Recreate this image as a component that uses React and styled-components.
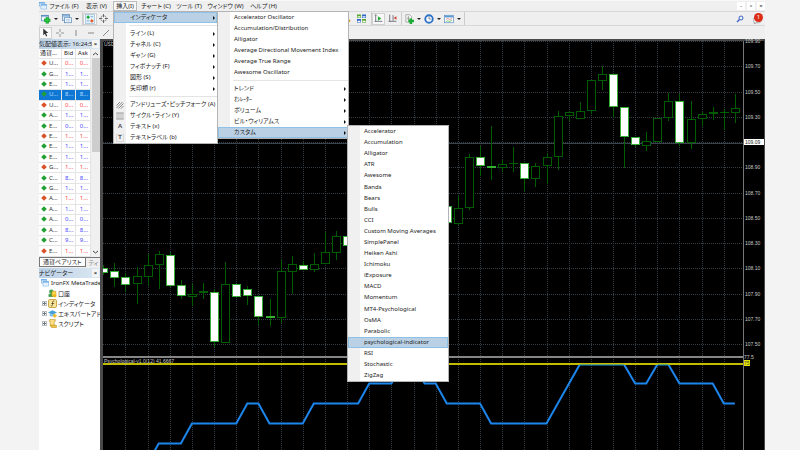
import React from 'react';
import styled, { createGlobalStyle, css } from 'styled-components';

const GlobalStyle = createGlobalStyle`
  * {
    box-sizing: border-box;
  }
  body {
    margin: 0;
    background: #f3f3f3;
    font-family: "Noto Sans", "Noto Sans CJK JP", sans-serif;
    font-size: 6px;
    color: #222;
  }
  button {
    font: inherit;
    color: inherit;
    background: none;
    border: 0;
    margin: 0;
    padding: 0;
  }
  ul {
    list-style: none;
    margin: 0;
    padding: 0;
  }
`;

const menus = ['ファイル (F)', '表示 (V)', '挿入(I)', 'チャート (C)', 'ツール (T)', 'ウィンドウ (W)', 'ヘルプ (H)'];

const customIndicators = [
  'Accelerator', 'Accumulation', 'Alligator', 'ATR', 'Awesome', 'Bands', 'Bears', 'Bulls', 'CCI',
  'Custom Moving Averages', 'SimplePanel', 'Heiken Ashi', 'Ichimoku', 'iExposure', 'MACD', 'Momentum',
  'MT4-Psychological', 'OsMA', 'Parabolic', 'psychological-indicator', 'RSI', 'Stochastic', 'ZigZag',
].map((label) => ({ label, active: label === 'psychological-indicator' }));

const indicatorMenu = [
  { label: 'Accelerator Oscillator' },
  { label: 'Accumulation/Distribution' },
  { label: 'Alligator' },
  { label: 'Average Directional Movement Index' },
  { label: 'Average True Range' },
  { label: 'Awesome Oscillator' },
  { line: true },
  { label: 'トレンド', more: true },
  { label: 'ｵｼﾚｰﾀｰ', more: true },
  { label: 'ボリューム', more: true },
  { label: 'ビル・ウィリアムス', more: true },
  { label: 'カスタム', more: true, active: true, children: customIndicators },
];

const insertMenu = [
  { label: 'インディケータ', more: true, active: true, children: indicatorMenu },
  { line: true },
  { label: 'ライン (L)', more: true },
  { label: 'チャネル (C)', more: true },
  { label: 'ギャン (G)', more: true },
  { label: 'フィボナッチ (F)', more: true },
  { label: '図形 (S)', more: true },
  { label: '矢印類 (r)', more: true },
  { line: true },
  { label: 'アンドリューズ・ピッチフォーク (A)', icon: 'fork' },
  { label: 'サイクル・ライン (Y)', icon: 'cycle' },
  { label: 'テキスト (x)', icon: 'text' },
  { label: 'テキストラベル (b)', icon: 'label' },
];

// symbol, price, direction, selected
const quotes = [
  ['U...', '0...', 'down'], ['G...', '1...', 'up'], ['E...', '1...', 'up'], ['U...', '8...', 'up', true],
  ['U...', '0...', 'down'], ['A...', '1...', 'up'], ['E...', '0...', 'up'], ['E...', '1...', 'down'],
  ['E...', '1...', 'up'], ['E...', '1...', 'up'], ['G...', '1...', 'down'], ['C...', '8...', 'up'],
  ['G...', '1...', 'up'], ['A...', '1...', 'down'], ['A...', '1...', 'up'], ['A...', '0...', 'up'],
  ['A...', '8...', 'up'], ['C...', '9...', 'up'], ['E...', '1...', 'down'],
];

// bar index, body top, body bottom, high, low, filled
const candles = [
  [0, 268, 273, 265, 275, 1], [1, 271, 278, 263, 287, 1], [2, 277, 285, 273, 292, 1],
  [3, 276, 284, 267, 304], [4, 265, 277, 254, 285], [5, 254, 265, 251, 289],
  [6, 255, 286, 252, 287, 1], [7, 285, 296, 280, 299, 1], [8, 294, 297, 284, 306],
  [9, 291, 293, 283, 299], [10, 292, 342, 289, 347, 1], [11, 284, 343, 262, 343],
  [12, 284, 297, 284, 297, 1], [13, 289, 296, 286, 305, 1], [14, 296, 317, 296, 325, 1],
  [15, 316, 318, 299, 326, 1], [16, 271, 318, 260, 323], [17, 264, 272, 256, 294],
  [18, 265, 270, 261, 270, 1], [19, 264, 270, 253, 272], [20, 252, 264, 232, 264],
  [21, 236, 253, 231, 260], [22, 236, 246, 236, 246, 1], [31, 206, 223, 206, 223, 1],
  [32, 208, 224, 196, 225], [33, 157, 208, 154, 210], [34, 157, 166, 146, 176, 1],
  [35, 166, 168, 126, 180, 1], [36, 164, 168, 160, 172], [37, 163, 164, 147, 172],
  [38, 163, 179, 163, 191, 1], [39, 166, 179, 163, 187], [40, 157, 166, 153, 184],
  [41, 116, 157, 111, 170], [42, 112, 116, 111, 121], [43, 111, 119, 102, 119],
  [44, 80, 111, 80, 114], [45, 74, 81, 66, 90], [46, 74, 107, 74, 117, 1],
  [47, 107, 137, 107, 168, 1], [48, 137, 145, 137, 147, 1], [49, 141, 146, 132, 151],
  [50, 118, 142, 118, 142], [51, 101, 118, 93, 121], [52, 101, 143, 94, 146, 1],
  [53, 119, 143, 101, 149], [54, 114, 119, 112, 126], [55, 112, 114, 107, 120],
  [56, 112, 113, 109, 130], [57, 108, 113, 94, 123],
];

// bar index, y
const psycho = [
  [4, 463], [5, 443], [7, 443], [8, 423], [12, 423], [13, 403], [14, 403], [15, 423], [18, 423], [19, 403],
  [23, 403], [24, 383], [26, 383], [27, 364], [28, 364], [29, 383], [30, 383], [31, 403], [34, 403],
  [35, 423], [40, 423], [43, 364], [47, 364], [48, 383], [49, 383], [50, 364], [51, 364], [52, 383],
  [55, 383], [56, 403], [57, 403],
];

const prices = ['109.90', '109.70', '109.50', '109.30', '109.09', '108.90', '108.70', '108.50', '108.30', '108.10', '107.90', '107.70', '107.50'];

const barX = (i) => 103.3 + i * 11.08;

/* ---------- icons ---------- */

const glyphs = {
  logo: (
    <>
      <rect x="1" y="1" width="10" height="7" fill="#fff" stroke="#4f9ae0" />
      <path d="M1 2h10" stroke="#4f9ae0" strokeWidth="2" />
      <rect x="4" y="5" width="11" height="9" fill="#fff" stroke="#4f9ae0" />
      <path d="M4 6h11" stroke="#4f9ae0" strokeWidth="2" />
      <path d="M6 11l2-2 2 2 3-2" fill="none" stroke="#79b4e8" />
    </>
  ),
  newChart: (
    <>
      <rect x="1" y="2" width="11" height="9" fill="#eef6ff" stroke="#4c82b8" />
      <path d="M1 3h11" stroke="#4c82b8" strokeWidth="2" />
      <path d="M10 5v10M5 10h10" stroke="#10932a" strokeWidth="5" />
      <path d="M10 6v8M6 10h8" stroke="#27c63f" strokeWidth="3" />
    </>
  ),
  profiles: (
    <>
      <rect x="1" y="1" width="11" height="9" fill="#dcebfa" stroke="#4477a8" />
      <path d="M1 3h11" stroke="#6fa2d4" strokeWidth="2" />
      <rect x="4" y="6" width="11" height="8" fill="#f7fbff" stroke="#4477a8" />
      <path d="M6 9h7M6 11h7" stroke="#8eb8df" />
    </>
  ),
  market: (
    <>
      <rect x="1" y="1" width="14" height="14" fill="#e4f1fb" stroke="#8cb6d8" />
      <path d="M5 2l3 3-3 3-3-3z" fill="#1ba832" />
      <path d="M11 8l3 3-3 3-3-3z" fill="#e35c22" />
      <path d="M9 4h4M3 11h4" stroke="#8cbbe2" strokeWidth="2" />
    </>
  ),
  target: (
    <>
      <circle cx="8" cy="8" r="5" fill="#fff" stroke="#555" />
      <path d="M8 0v6M8 10v6M0 8h6M10 8h6" stroke="#555" strokeWidth="1.5" />
    </>
  ),
  handle: <path d="M0 7l6 6" stroke="#d8a02a" strokeWidth="4" />,
  tiles: (
    <>
      <path d="M0 1h7v6H0zM9 9h7v6H9z" fill="#56a631" />
      <path d="M9 1h7v6H9zM0 9h7v6H0z" fill="#2f66c4" />
      <path d="M1 5h5M10 5h5M1 13h5M10 13h5" stroke="#fff" strokeWidth="2" />
    </>
  ),
  scroll: (
    <>
      <path d="M3 1v13M1 13h14" stroke="#667" strokeWidth="1.5" />
      <path d="M7 4l6 4-6 4z" fill="#22ac38" />
      <path d="M1 3l2-2 2 2" fill="none" stroke="#667" />
    </>
  ),
  shift: (
    <>
      <path d="M3 1v13M1 13h14M9 2v10" stroke="#667" strokeWidth="1.5" />
      <path d="M15 4l-5 3 5 3z" fill="#c8452c" />
    </>
  ),
  addIndicator: (
    <>
      <path d="M3 1h6l3 3v9H3z" fill="#f6f6f6" stroke="#888" />
      <path d="M5 7h4M7 3v8" stroke="#777" />
      <path d="M11 7v9M7 11h9" stroke="#1cab34" strokeWidth="4" />
    </>
  ),
  clock: (
    <>
      <circle cx="8" cy="8" r="6" fill="#f4faff" stroke="#2d73c7" strokeWidth="3" />
      <path d="M8 4v4h3" fill="none" stroke="#555" />
    </>
  ),
  template: (
    <>
      <rect x="1" y="2" width="14" height="12" fill="#fff" stroke="#4b86bd" />
      <path d="M1 4h14" stroke="#5d9bd3" strokeWidth="3" />
      <path d="M3 9l3-2 3 2 4-2" fill="none" stroke="#c55" />
      <path d="M3 12l3-1 3 1 4-2" fill="none" stroke="#3a3" />
    </>
  ),
  search: (
    <>
      <circle cx="10" cy="6" r="4" fill="#eef3ff" stroke="#3c62c0" strokeWidth="2" />
      <path d="M7 9l-5 5" stroke="#3c62c0" strokeWidth="3" />
    </>
  ),
  chat: <path d="M1 7h10c4 3 2 7-2 7H6l-4 2v-3C0 12-1 9 1 7z" fill="#e4e4e4" stroke="#888" />,
  cursor: <path d="M4 1v12l3-3 2 5 2-1-2-5h4z" fill="#333" />,
  cross: <path d="M8 0v6M8 10v6M0 8h6M10 8h6" stroke="#777" strokeWidth="1.5" />,
  vline: <path d="M8 2v12" stroke="#666" strokeWidth="1.5" />,
  hline: <path d="M2 8h12" stroke="#666" strokeWidth="1.5" />,
  trend: <path d="M2 14L14 2" stroke="#666" strokeWidth="1.5" />,
  fork: <path d="M1 9l7-7M1 14L13 2M5 15L15 5M10 15l5-5" stroke="#666" strokeWidth="1.5" />,
  cycle: <path d="M2 1v14M6 1v14M10 1v14M14 1v14M1 2h14M1 14h14" stroke="#777" />,
  label: <rect x="1" y="1" width="14" height="14" fill="none" stroke="#999" strokeDasharray="2 2" />,
  account: (
    <>
      <circle cx="6" cy="5" r="4" fill="#40a24a" />
      <path d="M1 14V9h10v5z" fill="#3d9b46" />
      <path d="M7 4h7v9H7z" fill="#ffd84d" stroke="#b98a12" />
      <circle cx="12" cy="12" r="3" fill="#f0b71c" />
    </>
  ),
  func: (
    <>
      <rect x="1" y="1" width="14" height="14" rx="2" fill="#f9e9a2" stroke="#bd9523" strokeWidth="1.5" />
      <path d="M11 4c-3-1-3 1-3 4s0 5-3 4M6 8h5" fill="none" stroke="#594514" strokeWidth="1.5" />
    </>
  ),
  expert: (
    <>
      <path d="M0 6l8-4 8 4-8 4z" fill="#4aa0d8" />
      <path d="M3 8v4c3 2 7 2 9 0V8l-4 2z" fill="#78bde6" />
      <path d="M12 8l4 4-4 4-4-4z" fill="#f0bd35" />
    </>
  ),
  script: (
    <>
      <path d="M3 1h10v3h-2v8H4V4H2z" fill="#ffe084" stroke="#b68c1d" />
      <path d="M4 11h11v4H6z" fill="#f3c33d" stroke="#b68c1d" />
    </>
  ),
};

const Svg = styled.svg`
  display: block;
  flex: none;
  width: ${(p) => p.$size || 10}px;
  height: ${(p) => p.$size || 10}px;
`;

const Icon = ({ name, size }) => (
  <Svg viewBox="0 0 16 16" $size={size} aria-hidden="true">{glyphs[name]}</Svg>
);

/* ---------- frame ---------- */

const Page = styled.div`
  height: 100vh;
  padding: 0 35px 0 39px;
  overflow: hidden;
`;

const Window = styled.div`
  height: 100%;
  display: flex;
  flex-direction: column;
  background: #efefef;
`;

const MenuBar = styled.nav`
  display: flex;
  align-items: stretch;
  height: 11px;
  border-top: 1px solid #f8f8f8;
  font-feature-settings: "palt";
  white-space: nowrap;
`;

const LogoBox = styled.div`
  width: 9px;
  display: flex;
  align-items: center;
`;

const MenuSlot = styled.div`
  position: relative;
  display: flex;
  width: ${(p) => p.$width}px;
`;

const MenuButton = styled.button`
  width: 100%;
  line-height: 9px;
  ${(p) => p.$open && css`
    background: #f7f7f7;
    box-shadow: inset 0 0 0 1px #bbb;
  `}
`;

const WindowButtons = styled.div`
  display: flex;
  align-items: center;
  gap: 2px;
  margin-left: auto;
`;

const WindowButton = styled.button`
  width: 8px;
  height: 8px;
  background: #fff;
  font-size: 6px;
  line-height: 7px;
`;

/* ---------- drop-down menus ---------- */

const MenuList = styled.ul`
  position: absolute;
  z-index: 2;
  top: ${(p) => p.$top};
  left: ${(p) => p.$left};
  width: ${(p) => p.$width}px;
  min-height: ${(p) => p.$minHeight || 0}px;
  display: flex;
  flex-direction: column;
  border: 1px solid #b4b4b4;
  background: linear-gradient(90deg, #f0f0f0 12px, #fff 12px);
`;

const MenuRow = styled.li`
  position: relative;
  flex: 1 0 11px;
  display: flex;
`;

const MenuLine = styled.li`
  height: 5px;
  margin-left: 15px;
  background: linear-gradient(#e4e4e4, #e4e4e4) 0 2px / 100% 1px no-repeat;
`;

const MenuItem = styled.button`
  width: 100%;
  display: grid;
  grid-template-columns: 16px 1fr 4px;
  align-items: center;
  text-align: left;
  line-height: 11px;
  white-space: nowrap;
  ${(p) => p.$active && css`
    background: #bad1e5;
    box-shadow: inset 0 0 0 1px #8fc0e6;
  `}
`;

const ItemIcon = styled.span`
  display: grid;
  place-items: center;
  width: 12px;
  font-size: 6px;
  color: #555;

  > * {
    grid-area: 1 / 1;
  }
`;

const Arrow = styled.span`
  width: 0;
  height: 0;
  border: 2px solid transparent;
  border-left-color: #111;
  border-right: 0;
`;

function Menu({ items, ...box }) {
  return (
    <MenuList role="menu" {...box}>
      {items.map((item, i) => item.line ? <MenuLine key={i} role="separator" /> : (
        <MenuRow key={i} role="none">
          <MenuItem role="menuitem" $active={item.active}>
            <ItemIcon>
              {item.icon && item.icon !== 'text' && <Icon name={item.icon} size={8} />}
              {item.icon === 'text' && <b>A</b>}
              {item.icon === 'label' && <b>T</b>}
            </ItemIcon>
            <span>{item.label}</span>
            {item.more && <Arrow />}
          </MenuItem>
          {item.children === indicatorMenu && <Menu items={item.children} $top="-1px" $left="103px" $width={132} />}
          {item.children === customIndicators && (
            <Menu items={item.children} $top="-2px" $left="129px" $width={102} $minHeight={257} />
          )}
        </MenuRow>
      ))}
    </MenuList>
  );
}

/* ---------- toolbars ---------- */

const Toolbar = styled.div`
  display: flex;
  align-items: center;
  height: 14px;
  border-top: 1px solid #d8d8d8;
`;

const ToolGroup = styled.div`
  display: flex;
  align-items: center;
  height: 13px;
  padding-right: 2px;
  border-right: 1px solid #ccc;
`;

const ToolButton = styled.button`
  width: ${(p) => p.$width || 15}px;
  height: 12px;
  display: flex;
  align-items: center;
  justify-content: center;
  ${(p) => p.$pressed && css`
    background: #f8f8f8;
    box-shadow: inset 0 0 0 1px #d0d0d0;
  `}
`;

const Caret = styled.span`
  margin-left: 3px;
  border: 2px solid transparent;
  border-top-color: #222;
  border-bottom: 0;
`;

const Covered = styled.div`
  width: 239px;
`;

const RightTools = styled.div`
  display: flex;
  gap: 3px;
  margin-left: auto;
`;

const ChatButton = styled(ToolButton)`
  position: relative;
`;

const Badge = styled.span`
  position: absolute;
  top: 0;
  right: 2px;
  width: 9px;
  height: 9px;
  border-radius: 50%;
  background: #dc2c16;
  color: #fff;
  font-size: 6px;
  line-height: 9px;
  text-align: center;
`;

/* ---------- side panels ---------- */

const Body = styled.div`
  flex: 1;
  min-height: 0;
  display: flex;
`;

const Side = styled.aside`
  width: 61px;
  display: flex;
  flex-direction: column;
  overflow: hidden;
  white-space: nowrap;
  font-feature-settings: "palt";
`;

const PanelTitle = styled.header`
  display: flex;
  align-items: center;
  height: 10px;
  padding-right: 1px;
  background: linear-gradient(90deg, #b9cfe4, #dce8f3);
  line-height: 10px;

  span {
    flex: 1;
    min-width: 0;
    overflow: hidden;
  }
  button {
    flex: none;
    width: 7px;
    height: 8px;
    background: #f4f4f4;
    font-size: 6px;
    line-height: 7px;
    font-weight: bold;
  }
`;

const QuoteBox = styled.div`
  display: flex;
  background: #fff;
`;

const QuoteTable = styled.table`
  width: 52px;
  height: 208px;
  table-layout: fixed;
  border-collapse: collapse;
  line-height: 9px;

  th, td {
    padding: 0 2px 0 0;
    border: solid #e4e4e4;
    border-width: 0 1px 1px 0;
    text-align: right;
    font-weight: normal;
    overflow: hidden;
  }
  th:first-child, td:first-child {
    width: 22px;
    padding-left: 1px;
    text-align: left;
  }
`;

const Quote = styled.tr`
  color: ${(p) => (p.$dir === 'up' ? '#4a4aff' : '#ff4545')};
  td:first-child {
    color: #333;
  }
  ${(p) => p.$selected && css`
    background: #0f78d4;
    &, td:first-child {
      color: #b9dcff;
    }
  `}
`;

const Diamond = styled.i`
  display: inline-block;
  width: 4px;
  height: 4px;
  margin: 0 3px 0 2px;
  background: ${(p) => (p.$dir === 'up' ? '#23a035' : '#d9532a')};
  transform: rotate(45deg);
`;

const Scroll = styled.div`
  flex: 1;
  display: flex;
  flex-direction: column;
  align-items: center;
  justify-content: space-between;
  padding: 3px 0;
  background: #f0f0f0;
`;

const Thumb = styled.div`
  width: 8px;
  height: 94px;
  margin: 2px 0 auto;
  background: #cdcdcd;
`;

const Chevron = styled.svg`
  width: 5px;
  height: 4px;
  fill: none;
  stroke: #444;
`;

const Tabs = styled.div`
  display: flex;
  height: 10px;
  margin-bottom: 1px;
  border-top: 1px solid #777;
`;

const Tab = styled.button`
  flex: none;
  height: 9px;
  padding: 0 3px;
  line-height: 8px;
  color: ${(p) => (p.$active ? '#222' : '#888')};
  ${(p) => p.$active ? css`
    background: #fff;
    border: 1px solid #777;
    border-top: 0;
  ` : css`
    padding-right: 0;
  `}
`;

const Tree = styled.ul`
  flex: 1;
  background: #fff;
`;

const TreeNode = styled.li`
  display: flex;
  align-items: center;
  gap: ${(p) => (p.$root ? 2 : 1)}px;
  height: 10px;
  padding-left: ${(p) => (p.$root ? 2 : 3)}px;
`;

const Expander = styled.span`
  flex: none;
  width: 5px;
  height: 5px;
  ${(p) => p.$shown && css`
    background:
      linear-gradient(#678, #678) 2px 1px / 1px 3px no-repeat,
      linear-gradient(#678, #678) 1px 2px / 3px 1px no-repeat;
    outline: 1px solid #bbb;
    outline-offset: -1px;
  `}
`;

/* ---------- chart ---------- */

const ChartPane = styled.main`
  flex: 1;
  min-width: 0;
  display: flex;
  border: solid #4a4a4a;
  border-width: 2px 1px 0 3px;
  background: #000;
  color: #c8c8c8;
  font-family: "Liberation Sans", sans-serif;
  font-size: 5px;
`;

const Plot = styled.div`
  position: relative;
  flex: 1;
  min-width: 0;
  border-right: 1px solid #777;
`;

const PlotSvg = styled.svg`
  display: block;
  width: 100%;
  height: 100%;
`;

const PlotLabel = styled.span`
  position: absolute;
  top: ${(p) => p.$top};
  left: 1px;
  line-height: 6px;
`;

const Axis = styled.div`
  width: 20px;
  display: flex;
  flex-direction: column;
`;

const Prices = styled.ul`
  flex: 309 0 0;
  display: flex;
  flex-direction: column;
  justify-content: space-between;
  margin-top: -3px;
`;

const Price = styled.li`
  padding-left: 1px;
  line-height: 6px;
  ${(p) => p.$current && css`
    background: #fff;
    color: #222;
  `}
`;

const SubAxis = styled.div`
  position: relative;
  flex: 96 0 0;
  padding-top: 7px;
  line-height: 6px;
`;

const LevelTag = styled.span`
  position: absolute;
  top: 13px;
  left: 0;
  width: 6px;
  background: #e6e600;
  color: #444;
`;

function Chart() {
  return (
    <ChartPane>
      <Plot>
        <PlotSvg viewBox="103 41 640 409" preserveAspectRatio="none" role="img" aria-label="USDJPY">
          <g stroke="#343c44" strokeDasharray="1 1">
            {prices.map((p, i) => {
              const y = Math.round(41 + i * 25.25) + 0.5;
              return <path key={p} d={`M103 ${y}H743`} />;
            })}
            {Array.from({ length: 28 }, (_, i) => {
              const x = Math.round(barX(2 + i * 2)) + 0.5;
              return <path key={x} d={`M${x} 41V450`} />;
            })}
          </g>
          <path d="M103 143.5H743" stroke="#39434c" />
          <g shapeRendering="crispEdges">
            {candles.map(([i, top, bottom, high, low, filled]) => {
              const x = Math.round(barX(i));
              const stroke = filled ? '#35b035' : '#005c00';
              return (
                <g key={i} stroke={stroke}>
                  <path d={`M${x + 0.5} ${high}V${low}`} stroke="#005c00" />
                  <rect
                    x={x - 3.5}
                    y={top + 0.5}
                    width="8"
                    height={Math.max(bottom - top - 1, 0.1)}
                    fill={filled ? '#fff' : '#000'}
                  />
                </g>
              );
            })}
          </g>
          <path d="M103 357H743" stroke="#858585" strokeWidth="2" />
          <polyline
            points={psycho.map(([i, y]) => `${barX(i)},${y + 0.5}`).join(' ')}
            fill="none"
            stroke="#1c86ee"
            strokeWidth="2"
          />
          <path d="M103 364H743" stroke="#c2bd00" strokeWidth="2" />
          <path d={`M${barX(43)} 364.5H${barX(47)}M${barX(50)} 364.5H${barX(51)}`} stroke="#62a862" />
        </PlotSvg>
        <PlotLabel $top="0">USD</PlotLabel>
        <PlotLabel $top="77.5%">Psychological-v1.0(12) 41.6667</PlotLabel>
      </Plot>
      <Axis>
        <Prices>
          {prices.map((p) => <Price key={p} $current={p === '109.09'}>{p}</Price>)}
        </Prices>
        <SubAxis>77.5<LevelTag>75</LevelTag></SubAxis>
      </Axis>
    </ChartPane>
  );
}

const slotWidths = [32, 33, 24, 38, 28, 45, 31];

export default function App() {
  return (
    <Page>
      <GlobalStyle />
      <Window>
        <MenuBar>
          <LogoBox><Icon name="logo" size={8} /></LogoBox>
          {menus.map((name, i) => (
            <MenuSlot key={name} $width={slotWidths[i]}>
              <MenuButton $open={i === 2}>{name}</MenuButton>
              {i === 2 && <Menu items={insertMenu} $top="10px" $left="0" $width={105} />}
            </MenuSlot>
          ))}
          <WindowButtons>
            <WindowButton aria-label="Minimize">-</WindowButton>
            <WindowButton aria-label="Restore">▫</WindowButton>
            <WindowButton aria-label="Close">×</WindowButton>
          </WindowButtons>
        </MenuBar>

        <Toolbar>
          <ToolGroup>
            <ToolButton $width={21} aria-label="New chart"><Icon name="newChart" /><Caret /></ToolButton>
            <ToolButton $width={20} aria-label="Profiles"><Icon name="profiles" /><Caret /></ToolButton>
          </ToolGroup>
          <ToolButton $width={14} $pressed aria-label="Market watch"><Icon name="market" /></ToolButton>
          <ToolButton $width={13} aria-label="Data window"><Icon name="target" size={9} /></ToolButton>
          <Covered />
          <ToolGroup>
            <ToolButton $width={4} aria-label="Zoom out"><Icon name="handle" size={8} /></ToolButton>
            <ToolButton $width={16} aria-label="Tile windows"><Icon name="tiles" size={9} /></ToolButton>
          </ToolGroup>
          <ToolGroup>
            <ToolButton $width={13} $pressed aria-label="Auto scroll"><Icon name="scroll" size={9} /></ToolButton>
            <ToolButton $width={14} aria-label="Chart shift"><Icon name="shift" size={9} /></ToolButton>
          </ToolGroup>
          <ToolGroup>
            <ToolButton $width={20} aria-label="Indicators"><Icon name="addIndicator" /><Caret /></ToolButton>
            <ToolButton $width={20} aria-label="Periods"><Icon name="clock" /><Caret /></ToolButton>
            <ToolButton $width={20} aria-label="Templates"><Icon name="template" /><Caret /></ToolButton>
          </ToolGroup>
          <RightTools>
            <ToolButton aria-label="Search"><Icon name="search" size={8} /></ToolButton>
            <ChatButton aria-label="Messages"><Icon name="chat" /><Badge>1</Badge></ChatButton>
          </RightTools>
        </Toolbar>

        <Toolbar>
          <ToolButton $width={13} $pressed aria-label="Cursor"><Icon name="cursor" size={9} /></ToolButton>
          <ToolButton $width={16} aria-label="Crosshair"><Icon name="cross" size={8} /></ToolButton>
          <ToolButton aria-label="Vertical line"><Icon name="vline" size={8} /></ToolButton>
          <ToolButton aria-label="Horizontal line"><Icon name="hline" size={8} /></ToolButton>
          <ToolButton aria-label="Trendline"><Icon name="trend" size={8} /></ToolButton>
        </Toolbar>

        <Body>
          <Side>
            <PanelTitle><span>気配値表示: 16:24:5</span><button aria-label="Close">×</button></PanelTitle>
            <QuoteBox>
              <QuoteTable>
                <thead>
                  <tr><th>通貨...</th><th>Bid</th><th>Ask</th></tr>
                </thead>
                <tbody>
                  {quotes.map(([symbol, price, dir, selected], i) => (
                    <Quote key={i} $dir={dir} $selected={selected}>
                      <td><Diamond $dir={dir} />{symbol}</td>
                      <td>{price}</td>
                      <td>{price}</td>
                    </Quote>
                  ))}
                </tbody>
              </QuoteTable>
              <Scroll>
                <Chevron viewBox="0 0 5 4"><path d="M0 3l2.500-2 2.500 2" /></Chevron>
                <Thumb />
                <Chevron viewBox="0 0 5 4"><path d="M0 1l2.500 2 2.500-2" /></Chevron>
              </Scroll>
            </QuoteBox>
            <Tabs>
              <Tab $active>通貨ペアリスト</Tab>
              <Tab>ティ</Tab>
            </Tabs>
            <PanelTitle><span>ナビゲーター</span><button aria-label="Close">×</button></PanelTitle>
            <Tree>
              <TreeNode $root><Icon name="logo" size={8} />IronFX MetaTrade</TreeNode>
              <TreeNode><Expander /><Icon name="account" size={9} />口座</TreeNode>
              <TreeNode><Expander $shown /><Icon name="func" size={9} />インディケータ</TreeNode>
              <TreeNode><Expander $shown /><Icon name="expert" size={9} />エキスパートアド</TreeNode>
              <TreeNode><Expander $shown /><Icon name="script" size={9} />スクリプト</TreeNode>
            </Tree>
          </Side>
          <Chart />
        </Body>
      </Window>
    </Page>
  );
}
